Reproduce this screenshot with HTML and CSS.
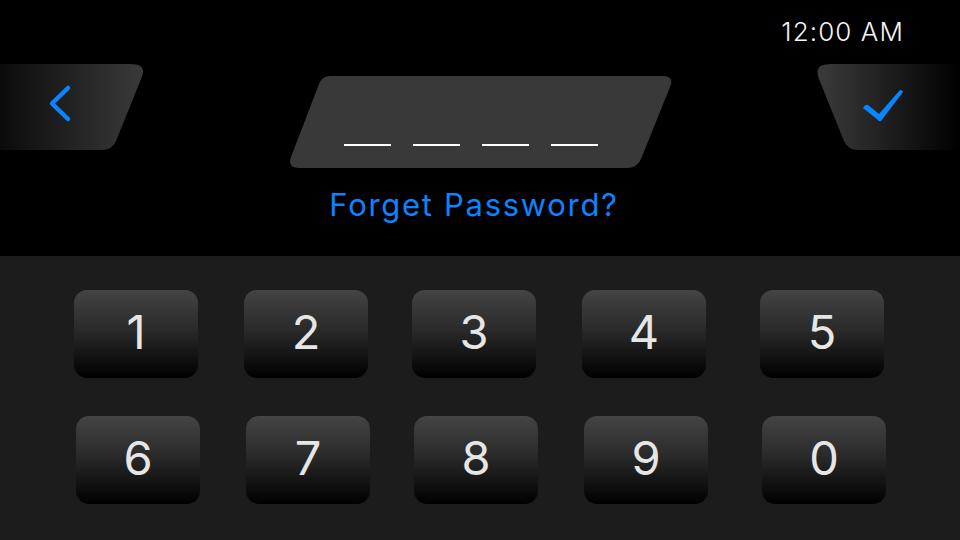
FILE: index.html
```html
<!DOCTYPE html>
<html>
<head>
<meta charset="utf-8">
<link rel="stylesheet" href="styles.css">
</head>
<body>
<div class="screen">
  <section class="top">
    <div class="status"><span class="clock">12:00 AM</span></div>
    <div class="entry-row">
      <button class="nav-btn back" aria-label="Back">
        <svg width="146" height="86" viewBox="0 0 146 86">
          <defs>
            <linearGradient id="gb" x1="0" y1="0" x2="1" y2="0">
              <stop offset="0" stop-color="#0b0b0b"/>
              <stop offset="1" stop-color="#3a3a3a"/>
            </linearGradient>
          </defs>
          <path d="M0 0 H131 Q148 0 141 15 L116 77 Q112 86 102 86 H0 Z" fill="url(#gb)"/>
          <path d="M68 24 L52 39.5 L68 55" fill="none" stroke="#0a84ff" stroke-width="4.5" stroke-linecap="round" stroke-linejoin="round"/>
        </svg>
      </button>
      <div class="field">
        <svg class="field-bg" width="384" height="92" viewBox="0 0 384 92">
          <path d="M42 0 H374 Q387 0 382 11 L353 83 Q349 92 339 92 H11 Q-1 92 3 81 L31 8 Q34 0 42 0 Z" fill="#393939"/>
        </svg>
        <div class="dashes">
          <span class="dash"></span>
          <span class="dash"></span>
          <span class="dash"></span>
          <span class="dash"></span>
        </div>
      </div>
      <button class="nav-btn ok" aria-label="Confirm">
        <svg width="146" height="86" viewBox="0 0 146 86">
          <defs>
            <linearGradient id="gc" x1="0" y1="0" x2="1" y2="0">
              <stop offset="0" stop-color="#3b3b3b"/>
              <stop offset="1" stop-color="#000000"/>
            </linearGradient>
          </defs>
          <path d="M146 0 H17 Q-1 0 5 15 L30 77 Q34 86 44 86 H146 Z" fill="url(#gc)"/>
          <path d="M49 44 Q51 40 54 41 L65 50 L86 26 Q89 26 89 28 L67 57 Q65 58 64 56 Z" fill="#0a84ff"/>
        </svg>
      </button>
    </div>
    <a class="forgot" href="#">Forget Password?</a>
  </section>
  <section class="keypad">
    <div class="key-row row-1">
      <div class="key">1</div>
      <div class="key">2</div>
      <div class="key tight">3</div>
      <div class="key">4</div>
      <div class="key wide">5</div>
    </div>
    <div class="key-row row-2">
      <div class="key">6</div>
      <div class="key">7</div>
      <div class="key tight">8</div>
      <div class="key">9</div>
      <div class="key wide">0</div>
    </div>
  </section>
</div>
</body>
</html>
```
FILE: styles.css
```css
* { box-sizing: border-box; }
html, body {
  margin: 0;
  padding: 0;
  background: #000;
  width: 960px;
  height: 540px;
  overflow: hidden;
  font-family: "Inter", "Open Sans", sans-serif;
}
.screen {
  width: 960px;
  height: 540px;
  display: flex;
  flex-direction: column;
}
.top {
  height: 256px;
  background: #000;
  display: flex;
  flex-direction: column;
}
.status {
  height: 64px;
  display: flex;
  justify-content: flex-end;
  padding: 15px 56px 0 0;
}
.clock {
  color: #f4f4f4;
  font-size: 26px;
  font-weight: 300;
  line-height: 34px;
  letter-spacing: 1.1px;
}
.entry-row {
  display: flex;
  justify-content: space-between;
  align-items: flex-start;
  height: 104px;
}
.nav-btn {
  border: 0;
  padding: 0;
  margin: 0;
  background: transparent;
  width: 146px;
  height: 86px;
  display: block;
}
.nav-btn svg { display: block; }
.field {
  position: relative;
  width: 384px;
  height: 92px;
  margin-top: 12px;
}
.field-bg {
  position: absolute;
  left: 0;
  top: 0;
}
.dashes {
  position: relative;
  display: flex;
  gap: 22px;
  padding: 68px 0 0 56px;
}
.dash {
  width: 47px;
  height: 2px;
  background: #fff;
}
.forgot {
  align-self: center;
  margin: 19px 0 0 -12px;
  color: #0a84ff;
  font-size: 31px;
  line-height: 36px;
  text-decoration: none;
  font-weight: 400;
  letter-spacing: 1.7px;
}
.keypad {
  flex: 1;
  background: #1c1c1c;
  display: flex;
  flex-direction: column;
  gap: 38px;
  padding-top: 34px;
}
.key-row {
  display: flex;
  gap: 46px;
}
.row-1 { padding-left: 74px; }
.row-2 { padding-left: 76px; }
.key {
  width: 124px;
  height: 88px;
  border-radius: 13px;
  background: linear-gradient(to bottom, #444444 0%, #2a2a2a 45%, #000000 100%);
  color: #e6e6e6;
  font-size: 47px;
  font-weight: 400;
  display: flex;
  align-items: center;
  justify-content: center;
  padding-bottom: 6px;
}
.key.tight { margin-left: -2px; }
.key.wide { margin-left: 8px; }
```
